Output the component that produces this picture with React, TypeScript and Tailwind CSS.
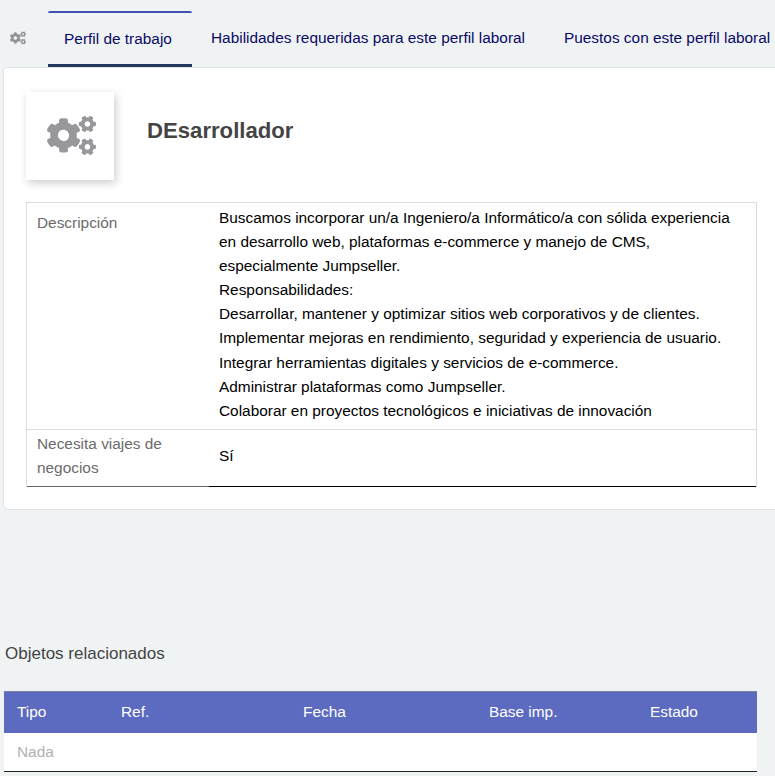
import { FaCogs } from 'react-icons/fa';

const DESCRIPTION = [
  'Buscamos incorporar un/a Ingeniero/a Informático/a con sólida experiencia',
  'en desarrollo web, plataformas e-commerce y manejo de CMS,',
  'especialmente Jumpseller.',
  'Responsabilidades:',
  'Desarrollar, mantener y optimizar sitios web corporativos y de clientes.',
  'Implementar mejoras en rendimiento, seguridad y experiencia de usuario.',
  'Integrar herramientas digitales y servicios de e-commerce.',
  'Administrar plataformas como Jumpseller.',
  'Colaborar en proyectos tecnológicos e iniciativas de innovación',
];

export default function App() {
  return (
    <div className="h-[776px] w-[775px] overflow-hidden bg-[#f0f3f4] font-['Liberation_Sans',Arial,sans-serif] text-[15.4px]">
      {/* Pestañas */}
      <div className="flex h-[67px] items-stretch whitespace-nowrap text-[#0a0a64]">
        <div className="flex w-[48px] items-center pl-[10px] pt-[8px] text-[#939397]">
          <FaCogs size={16} />
        </div>
        <div className="mt-[11px] flex w-[144px] items-center justify-center rounded-t-[2px] border-t-2 border-b-[3px] border-t-[#3f51b5] border-b-[#24375f] pr-[4px] pt-[1px]">
          Perfil de trabajo
        </div>
        <div className="flex items-center pl-[19px] pr-[20px] pt-[9px]">Habilidades requeridas para este perfil laboral</div>
        <div className="flex items-center pl-[19px] pt-[9px]">Puestos con este perfil laboral</div>
      </div>

      {/* Ficha */}
      <div className="ml-[3px] h-[443px] rounded-bl-[6px] rounded-tl-[4px] border-t border-b border-l border-[#e2e4e7] bg-white pl-[22px] pt-[24px]">
        <div className="flex items-center">
          <div className="flex h-[88px] w-[88px] items-center justify-center bg-white pb-[1px] pl-[2px] text-[#98989c] shadow-[2px_3px_8px_rgba(0,0,0,0.2)]">
            <FaCogs size={49} />
          </div>
          <div className="ml-[33px] pb-[10px] text-[22.15px] font-bold text-[#444444]">DEsarrollador</div>
        </div>

        <div className="mt-[22px] w-[731px] border-l border-r border-t border-[#dcdcdc] leading-[24.1px]">
          <div className="flex border-b border-[#dcdcdc] pb-[6px] pt-[3px]">
            <div className="w-[192px] shrink-0 pl-[10px] pt-[5px] text-[#6b6b6b]">Descripción</div>
            <div className="text-black">
              {DESCRIPTION.map((line) => (
                <div key={line} className="whitespace-nowrap">{line}</div>
              ))}
            </div>
          </div>
          <div className="flex">
            <div className="h-[57px] w-[182px] shrink-0 border-b border-[#666666] py-[2px] pl-[10px] text-[#6b6b6b]">
              Necesita viajes de negocios
            </div>
            <div className="h-[57px] flex-1 border-b border-black pl-[10px] pt-[14px] text-black">Sí</div>
          </div>
        </div>
      </div>

      {/* Objetos relacionados */}
      <div className="ml-[5px] mt-[133px] text-[17px] leading-[22px] text-[#444444]">Objetos relacionados</div>
      <div className="ml-[4px] mt-[26px] w-[753px]">
        <div className="flex h-[42px] items-center border-t border-[#7a7f9c] bg-[#5c6bc0] pb-[2px] text-white">
          <div className="w-[117px] pl-[13px]">Tipo</div>
          <div className="w-[182px]">Ref.</div>
          <div className="w-[186px]">Fecha</div>
          <div className="w-[161px]">Base imp.</div>
          <div>Estado</div>
        </div>
        <div className="flex h-[39px] items-center border-b border-[#222222] bg-white pb-[1px] pl-[13px] text-[#b0b0b0]">Nada</div>
      </div>
    </div>
  );
}
